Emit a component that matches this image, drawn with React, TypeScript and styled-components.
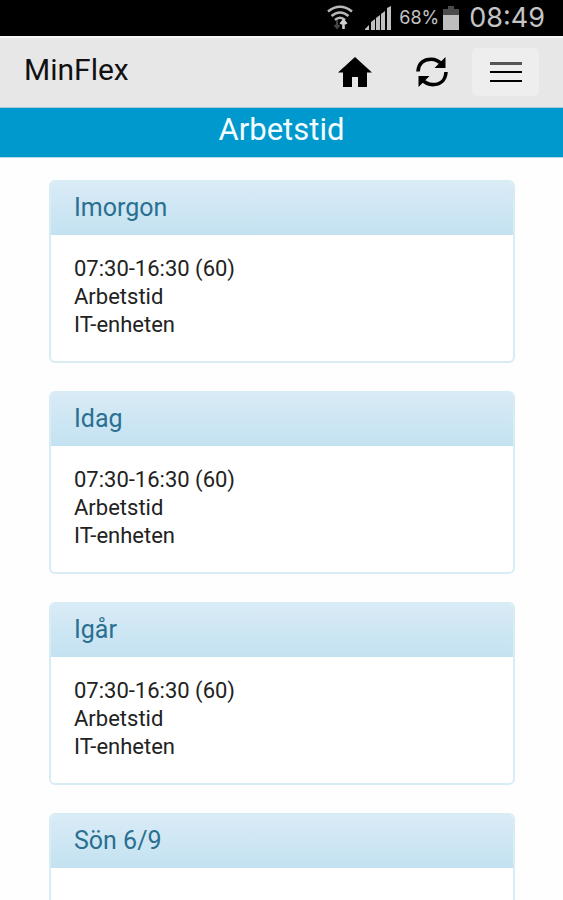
import React from 'react';
import styled, { createGlobalStyle } from 'styled-components';

const GlobalStyle = createGlobalStyle`
  * { box-sizing: border-box; }
  body {
    margin: 0;
    background: #fefefe;
    font-family: Roboto, 'Liberation Sans', sans-serif;
  }
  button { font: inherit; color: inherit; }
`;

const Screen = styled.div`
  display: flex;
  flex-direction: column;
  height: 100vh;
`;

const StatusBar = styled.div`
  display: flex;
  flex: none;
  align-items: center;
  justify-content: flex-end;
  height: 36px;
  padding-right: 18px;
  background: #000;
  color: #c4c4c4;
  font-family: Inter, 'Liberation Sans', sans-serif;
`;

const WifiIcon = styled.svg`
  width: 26px;
  height: 26px;
  margin-right: 12px;
`;

const SignalIcon = styled.svg`
  width: 26px;
  height: 24px;
  margin-right: 8px;
`;

const BatteryIcon = styled.svg`
  width: 16px;
  height: 24px;
  margin: 0 10px 0 4px;
`;

const BatteryLevel = styled.span`
  font-size: 18px;
  line-height: 24px;
`;

const Clock = styled.time`
  font-size: 27px;
  line-height: 36px;
`;

const Header = styled.header`
  display: flex;
  flex: none;
  align-items: center;
  height: 72px;
  padding: 0 24px 2px;
  border-top: 2px solid #f8f8f8;
  border-bottom: 1px solid #a9cbd9;
  background: #e7e7e7;
  color: #000;
`;

const Brand = styled.div`
  flex: 1;
  padding-bottom: 3px;
  color: #111;
  font-size: 30px;
  line-height: 36px;
`;

const Tools = styled.nav`
  display: flex;
  align-items: center;
`;

const ToolButton = styled.button<{ $boxed?: boolean }>`
  display: flex;
  align-items: center;
  justify-content: center;
  width: ${(p) => (p.$boxed ? 67 : 36)}px;
  height: 48px;
  margin-left: ${(p) => (p.$boxed ? 22 : 0)}px;
  padding: 0;
  border: 0;
  border-radius: 5px;
  background: ${(p) => (p.$boxed ? '#eeeeee' : 'transparent')};

  & + &:not(:last-child) { margin-left: 41px; }
`;

const PageTitle = styled.h1`
  flex: none;
  height: 50px;
  margin: 0;
  padding-top: 4px;
  border-bottom: 1px solid #b9dbe9;
  background: #0099ce;
  color: #f4fcff;
  font-size: 31px;
  font-weight: 400;
  line-height: 36px;
  text-align: center;
`;

const DayList = styled.main`
  display: flex;
  flex: 1;
  flex-direction: column;
  gap: 28px;
  min-height: 0;
  padding: 22px 48px 28px 49px;
  overflow-y: auto;
  scrollbar-width: none;
`;

const Card = styled.section`
  flex: none;
  border: 2px solid #d8edf3;
  border-radius: 6px;
  background: #fff;
  overflow: hidden;
`;

const CardTitle = styled.h2`
  margin: 0;
  padding: 10px 23px 12px;
  background: linear-gradient(#d9ebf6, #c3e2f1);
  color: #2b6f91;
  font-size: 25px;
  font-weight: 400;
  line-height: 31px;
`;

const CardBody = styled.div`
  min-height: 126px;
  padding: 20px 23px 22px;
  color: #222;
  font-size: 22px;
  line-height: 28px;
`;

const Line = styled.div``;

type Day = { title: string; lines: string[] };

const shift = ['07:30-16:30 (60)', 'Arbetstid', 'IT-enheten'];

const days: Day[] = [
  { title: 'Imorgon', lines: shift },
  { title: 'Idag', lines: shift },
  { title: 'Igår', lines: shift },
  { title: 'Sön 6/9', lines: [] },
];

export default function App() {
  return (
    <>
      <GlobalStyle />
      <Screen>
        <StatusBar>
          <WifiIcon viewBox="0 0 26 26" fill="none" stroke="#b8b8b8" strokeWidth="2.6">
            <path d="M1 6.500Q13 -3 25 6.500" />
            <path d="M4.500 11Q13 4 21.500 11" />
            <path d="M8 15Q13 10.500 18 15" />
            <path d="M10 15v8M7.500 20l2.500 3 2.500-3" stroke="#444" strokeWidth="2" />
            <path d="M16.500 24v-8M13.500 19l3-3.500 3 3.500" stroke="#d0d0d0" strokeWidth="2.600" />
          </WifiIcon>
          <SignalIcon viewBox="0 0 26 24" fill="#c0c0c0">
            <path d="M0 24v-1l4-4v5zM6 24v-8l4-3v11zM11 24V12l4-3v15zM16 24V8l4-3v19zM22 24V2l4-2v24z" />
          </SignalIcon>
          <BatteryLevel>68%</BatteryLevel>
          <BatteryIcon viewBox="0 0 16 24">
            <path d="M5 0h6v3h5v7H0V3h5z" fill="#4b4b4b" />
            <path d="M0 9h16v15H0z" fill="#bebebe" />
          </BatteryIcon>
          <Clock>08:49</Clock>
        </StatusBar>
        <Header>
          <Brand>MinFlex</Brand>
          <Tools>
            <ToolButton type="button" aria-label="Hem">
              <svg width="34" height="30" viewBox="0 0 34 30">
                <path d="M17 0L34 15.500H29V30H20V20H14V30H5V15.500H0z" fill="#000" />
              </svg>
            </ToolButton>
            <ToolButton type="button" aria-label="Uppdatera">
              <svg width="32" height="30" viewBox="0 0 32 30">
                <path d="M2 14.500C2.500 6 8 2.200 15 2.200C20 2.200 23 4 26 7.500" fill="none" stroke="#000" strokeWidth="3.600" />
                <path d="M29.500 0V11H18.500z" fill="#000" />
                <path d="M30 15C29.500 23.500 24 27.600 17 27.600C12 27.600 9 26 6 22.500" fill="none" stroke="#000" strokeWidth="3.600" />
                <path d="M2.500 30V19H13.500z" fill="#000" />
              </svg>
            </ToolButton>
            <ToolButton type="button" aria-label="Meny" $boxed>
              <svg width="34" height="20" viewBox="0 0 34 20">
                <path d="M1 0h32v3H1z" fill="#555" />
                <path d="M1 9h32v2H1zM1 18h32v2H1z" fill="#000" />
              </svg>
            </ToolButton>
          </Tools>
        </Header>
        <PageTitle>Arbetstid</PageTitle>
        <DayList>
          {days.map((day) => (
            <Card key={day.title}>
              <CardTitle>{day.title}</CardTitle>
              <CardBody>
                {day.lines.map((line) => (
                  <Line key={line}>{line}</Line>
                ))}
              </CardBody>
            </Card>
          ))}
        </DayList>
      </Screen>
    </>
  );
}
